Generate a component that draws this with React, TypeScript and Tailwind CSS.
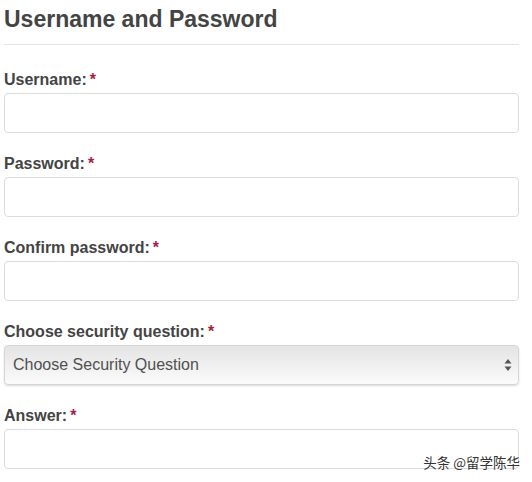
const font = { fontFamily: '"Liberation Sans", Arial, sans-serif' };

function Label({ text }: { text: string }) {
  return (
    <div className="h-[20px] text-[16px] leading-[20px] font-bold text-[#444]">
      {text}
      <span className="ml-[3px] text-[#a3223f]">*</span>
    </div>
  );
}

function Field({ label }: { label: string }) {
  return (
    <div className="flex flex-col gap-[3px]">
      <Label text={label} />
      <div className="h-[40px] rounded-[4px] border border-[#dcdcdc] bg-white" />
    </div>
  );
}

export default function App() {
  return (
    <div className="relative h-[482px] w-[532px] overflow-hidden bg-white" style={font}>
      <div className="pl-[4px] pr-[13px]">
        <h1 className="pt-[5px] text-[23px] leading-[28px] font-bold text-[#444]">Username and Password</h1>
        <div className="mt-[11px] h-px bg-[#e3e3e3]" />
        <div className="mt-[25px] flex flex-col gap-[21px]">
          <Field label="Username:" />
          <Field label="Password:" />
          <Field label="Confirm password:" />
          <div className="flex flex-col gap-[3px]">
            <Label text="Choose security question:" />
            <div className="flex h-[40px] items-center justify-between rounded-[4px] border border-[#d6d6d6] bg-gradient-to-b from-[#e4e4e4] to-[#fbfbfb] pl-[8px] pr-[6px] shadow-[0_1px_2px_rgba(0,0,0,0.15)]">
              <span className="text-[16px] text-[#505050]">Choose Security Question</span>
              <svg width="8" height="14" viewBox="0 0 8 14">
                <path d="M4 1 L7.5 5.5 H0.5 Z" fill="#555" />
                <path d="M4 13 L7.5 8.5 H0.5 Z" fill="#555" />
              </svg>
            </div>
          </div>
          <Field label="Answer:" />
        </div>
      </div>
      <div
        className="absolute right-[12px] bottom-[12px] text-[13.5px] leading-[16px] text-[#333]"
        style={{ fontFamily: '"Noto Sans CJK SC", sans-serif', textShadow: '0 0 2px #fff' }}
      >
        头条 @留学陈华
      </div>
    </div>
  );
}
